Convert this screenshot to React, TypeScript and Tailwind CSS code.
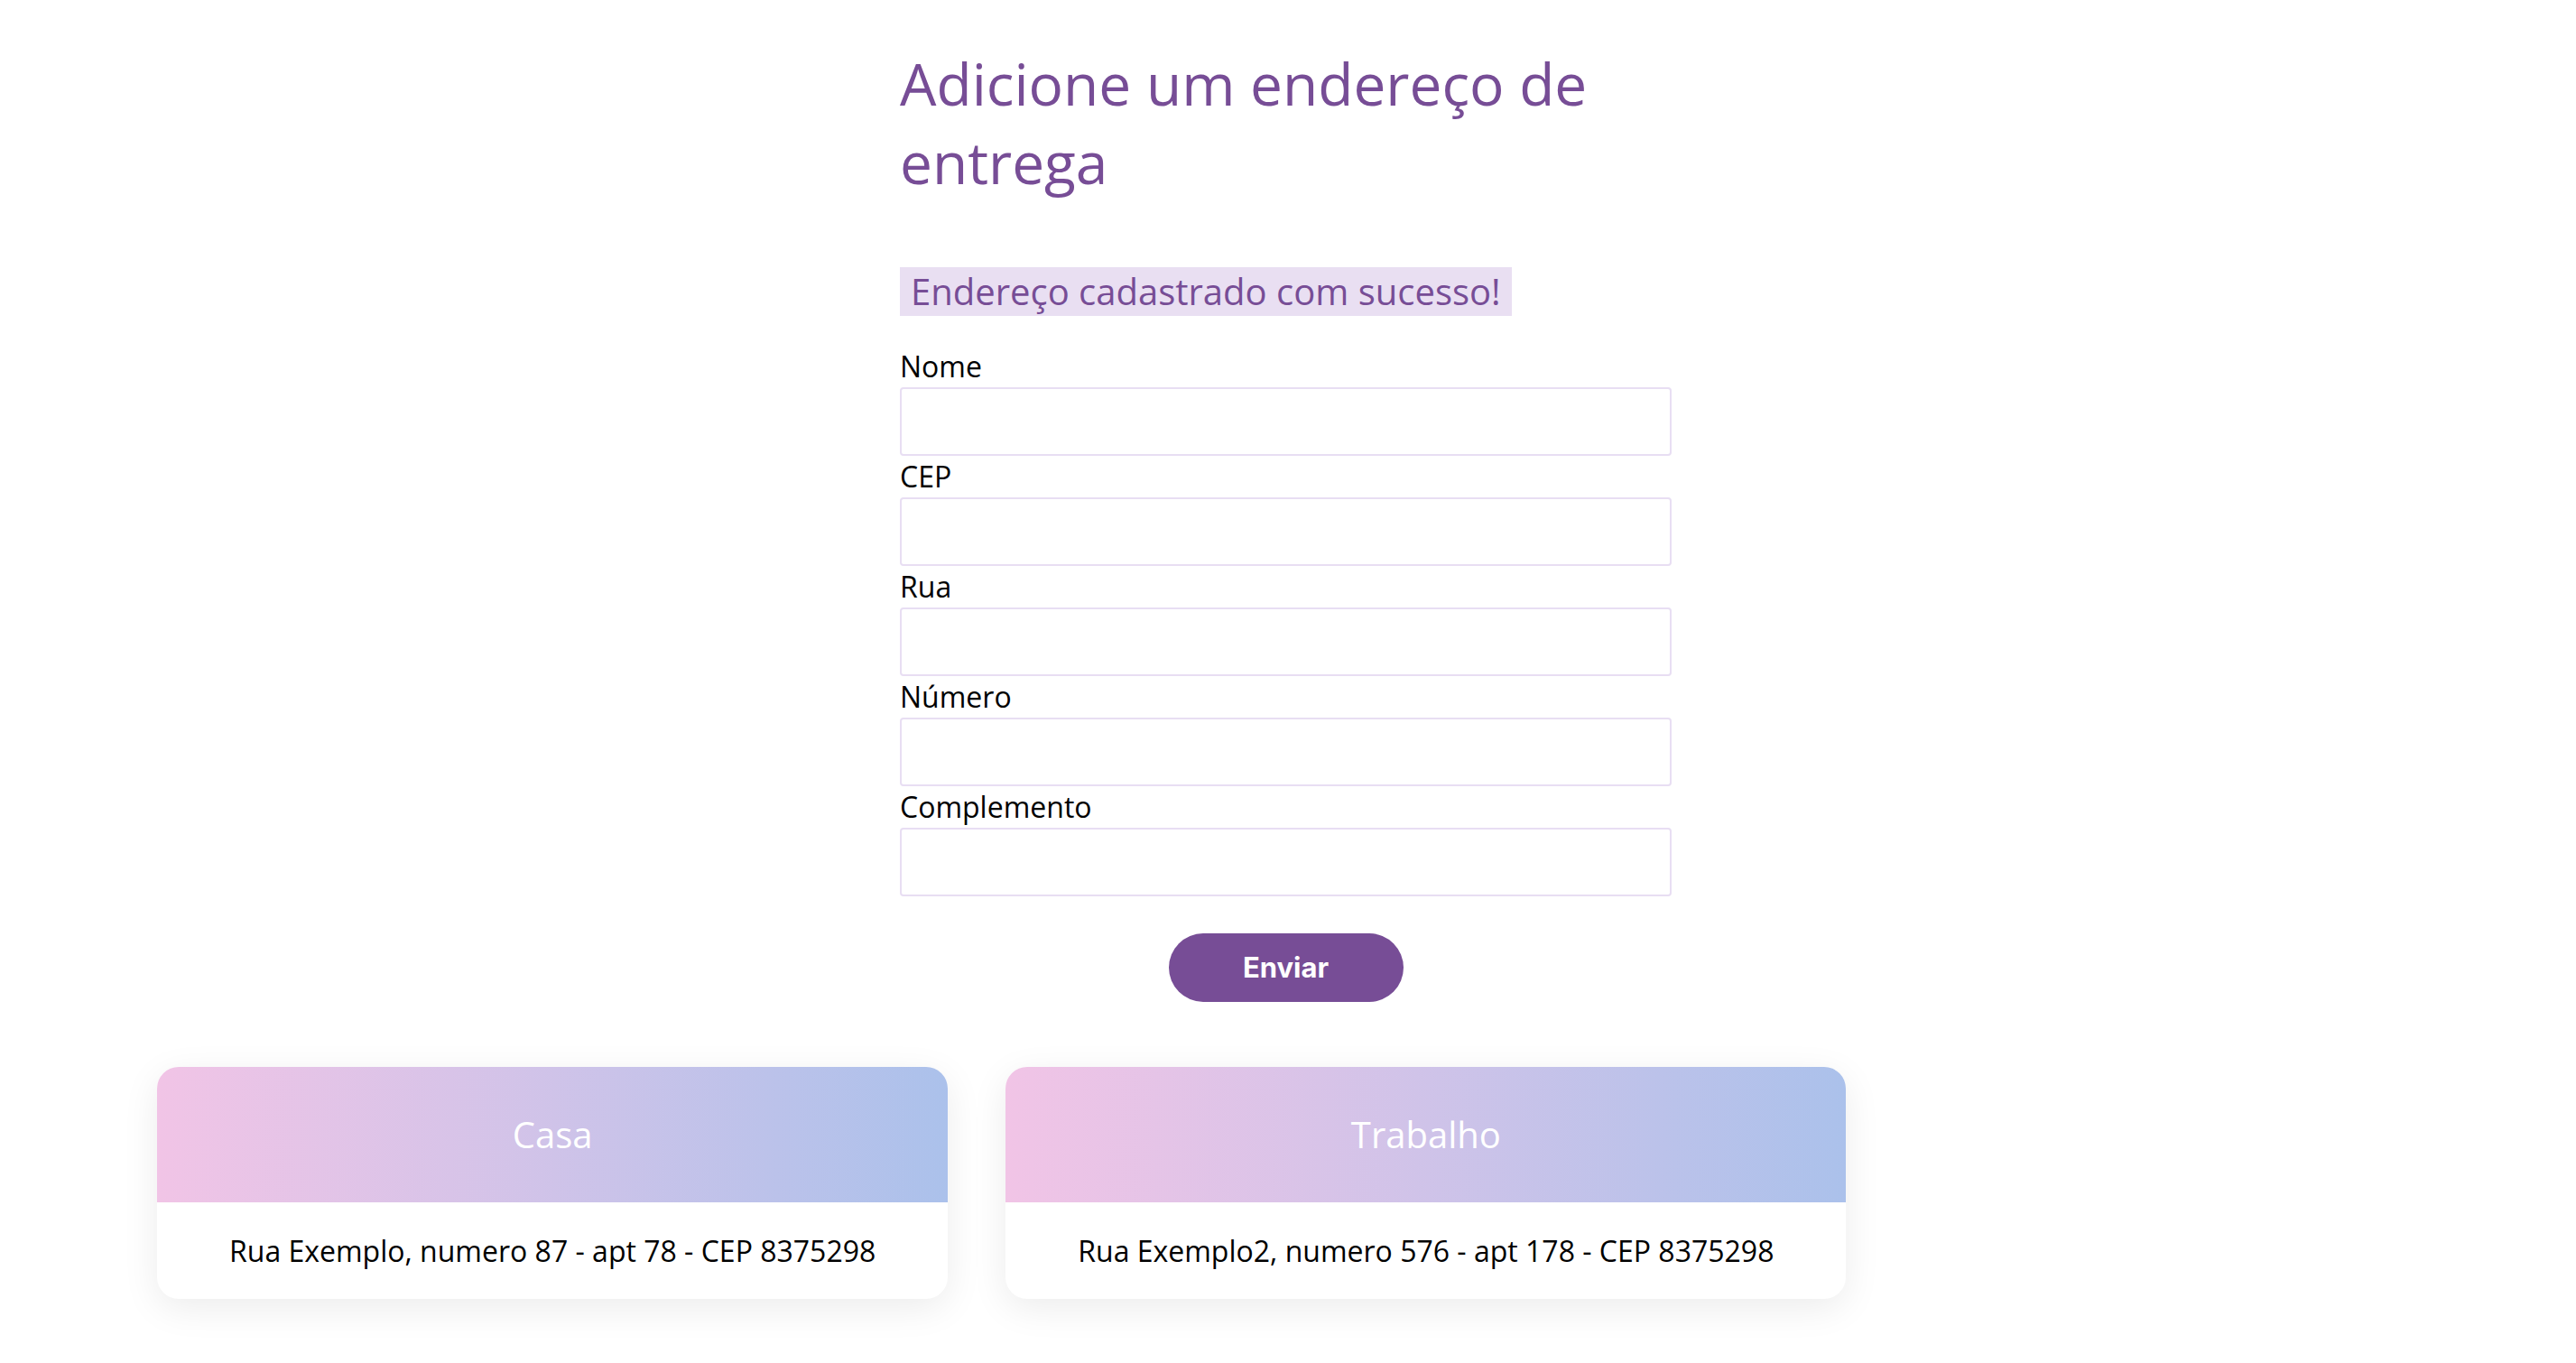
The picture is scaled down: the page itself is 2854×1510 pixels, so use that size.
import React from "react";

const fields = ["Nome", "CEP", "Rua", "Número", "Complemento"];

const cards = [
  { title: "Casa", text: "Rua Exemplo, numero 87 - apt 78 - CEP 8375298" },
  { title: "Trabalho", text: "Rua Exemplo2, numero 576 - apt 178 - CEP 8375298" },
];

export default function App() {
  return (
    <div
      className="min-h-screen w-full bg-white"
      style={{ fontFamily: '"Open Sans", "Noto Sans", sans-serif' }}
    >
      <div className="flex w-full justify-center pr-[5px] pt-[49px]">
        <div className="flex w-[855px] flex-col">
          <h1 className="text-[64px] font-medium leading-[87px] text-[#774d96]">
            Adicione um endereço de entrega
          </h1>
          <div className="mt-[73px]">
            <span className="inline-block bg-[#e9dff2] px-[12px] text-[40px] leading-[54px] text-[#774d96]">
              Endereço cadastrado com sucesso!
            </span>
          </div>
          <form className="mt-[33px] flex flex-col" onSubmit={(e) => e.preventDefault()}>
            {fields.map((f) => (
              <label key={f} className="flex flex-col">
                <span className="h-[46px] text-[32px] leading-[46px] text-black">{f}</span>
                <input
                  type="text"
                  className="h-[76px] w-[855px] rounded-[4px] border-2 border-[#e8def3] bg-white px-3 text-[32px] outline-none"
                />
              </label>
            ))}
            <div className="mt-[41px] flex justify-center">
              <button
                type="submit"
                className="h-[76px] w-[260px] rounded-full bg-[#774d96] text-[31px] font-bold text-white"
                style={{ fontFamily: 'Inter, "Liberation Sans", sans-serif' }}
              >
                Enviar
              </button>
            </div>
          </form>
        </div>
      </div>
      <div className="mt-[72px] flex items-start gap-[64px] pl-[174px] pb-[60px]">
        {cards.map((c) => (
          <div
            key={c.title}
            className="overflow-hidden rounded-[24px] bg-white shadow-[0_10px_40px_rgba(0,0,0,0.08)]"
          >
            <div className="flex h-[150px] items-center justify-center bg-gradient-to-r from-[#f1c4e6] to-[#abc1eb] text-[40px] text-white">
              {c.title}
            </div>
            <div className="flex h-[107px] items-center justify-center whitespace-nowrap px-[80px] text-[32px] text-black">
              {c.text}
            </div>
          </div>
        ))}
      </div>
    </div>
  );
}
